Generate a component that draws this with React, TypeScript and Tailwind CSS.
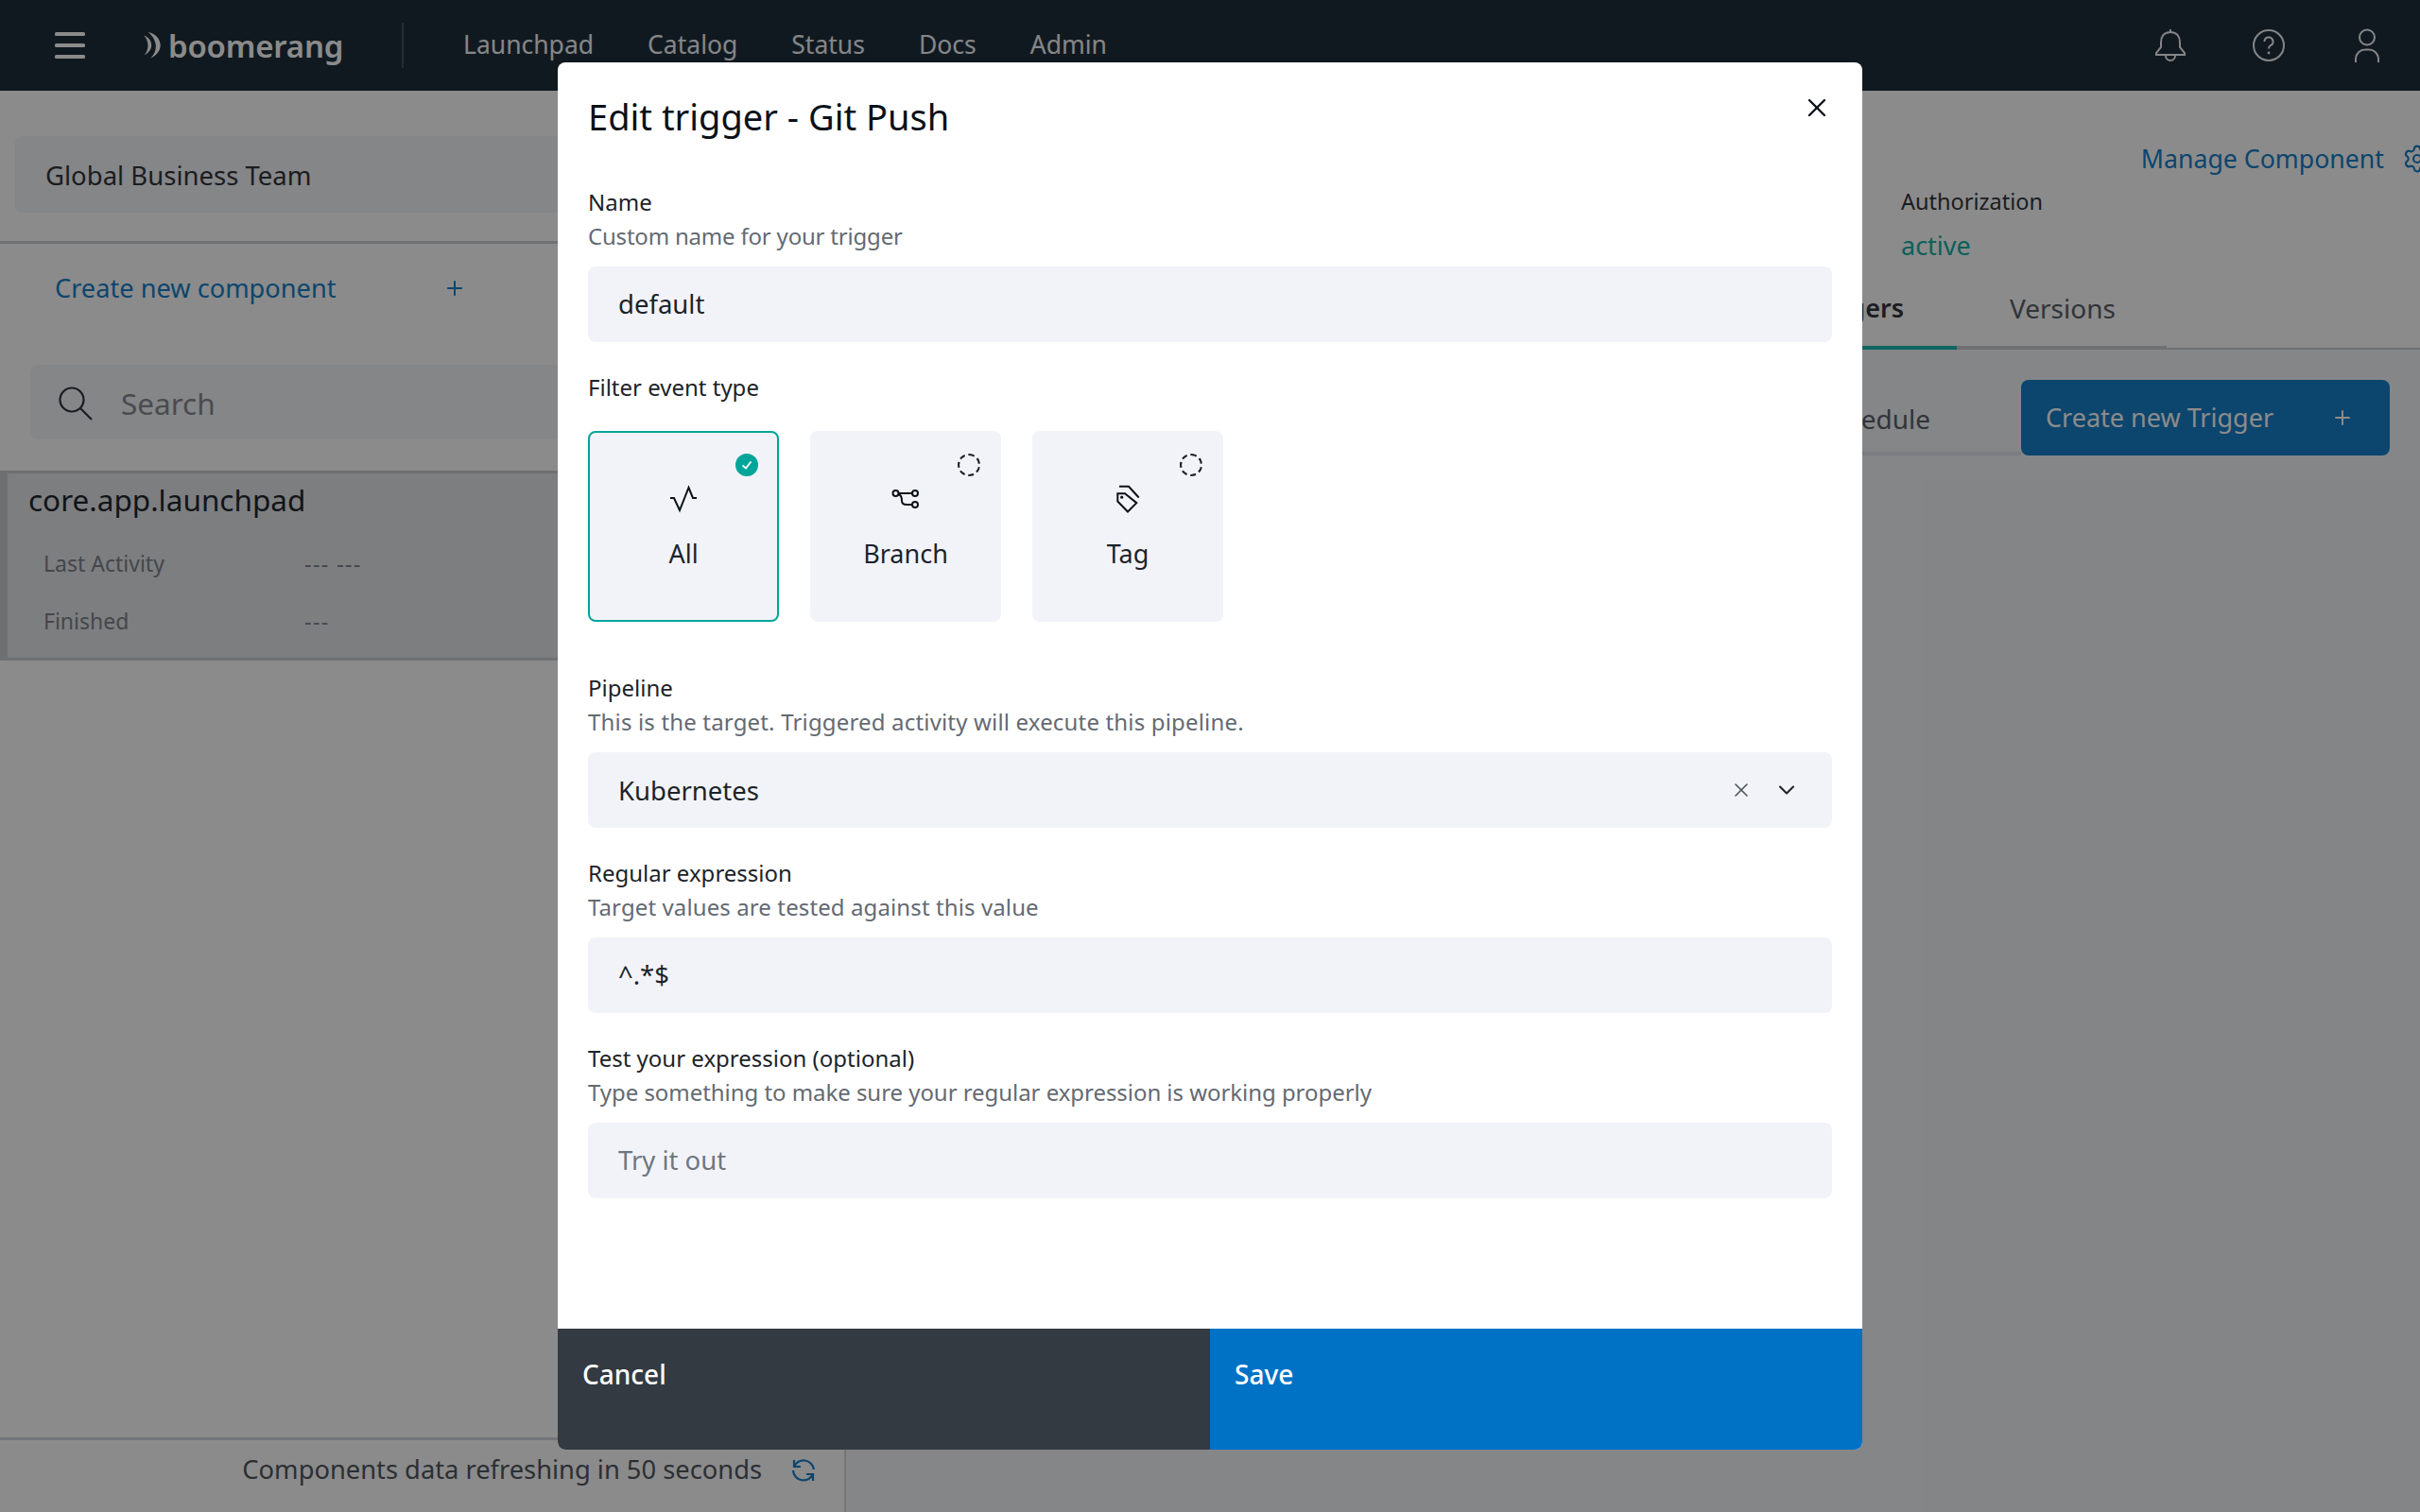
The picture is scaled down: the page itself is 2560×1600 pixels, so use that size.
import React from 'react'
import { Plus, Settings, X, ChevronDown } from 'lucide-react'

const NAV = ['Launchpad', 'Catalog', 'Status', 'Docs', 'Admin']

const Header: React.FC = () => (
  <header className="h-24 bg-[#0b1b29] flex items-center shrink-0 text-[#f2f4f8]">
    <svg width="32" height="28" viewBox="0 0 32 28" fill="white" className="ml-[58px]">
      <rect y="0" width="32" height="4" rx="1.5" />
      <rect y="12" width="32" height="4" rx="1.5" />
      <rect y="24" width="32" height="4" rx="1.5" />
    </svg>
    <div className="ml-[60px] flex items-center w-[275px] text-white">
      <svg width="23" height="30" viewBox="450 100 70 90" fill="currentColor">
        <path d="M457 113C486 125 492 158 458 177C474 158 474 132 457 113Z" />
        <path d="M470 102C512 112 530 160 478 187C504 160 500 128 470 102Z" />
      </svg>
      <span className="ml-[5px] text-[33px] leading-none font-semibold tracking-[-0.2px]">boomerang</span>
    </div>
    <div className="w-0.5 h-12 bg-[#33404c]" />
    <nav className="flex ml-[63px] gap-[57px] text-[26.5px]">
      {NAV.map((n) => <span key={n}>{n}</span>)}
    </nav>
    <div className="ml-auto mr-[38px] flex gap-[68px]" >
      <svg width="36" height="36" viewBox="0 0 36 36" fill="none" stroke="currentColor" strokeWidth="2">
        <path d="M18 1V4C11 4 8 9 8 15V20L3 26V28H33V26L28 20V15C28 9 25 4 18 4" />
        <path d="M13 29A5 5 0 0 0 23 29" />
      </svg>
      <svg width="36" height="36" viewBox="0 0 36 36" fill="none" stroke="currentColor" strokeWidth="2">
        <circle cx="18" cy="18" r="16" />
        <path d="M13.5 14a4.5 4.5 0 1 1 6.5 4c-1.4.8-2 1.5-2 3.5" />
        <circle cx="18" cy="26" r="1.4" fill="currentColor" stroke="none" />
      </svg>
      <svg width="36" height="36" viewBox="0 0 36 36" fill="none" stroke="currentColor" strokeWidth="2">
        <circle cx="18" cy="9.5" r="8" />
        <path d="M6 36V32A10 10 0 0 1 16 22.5H20A10 10 0 0 1 30 32V36" />
      </svg>
    </div>
  </header>
)

const Sidebar: React.FC = () => (
  <aside className="w-[895px] shrink-0 bg-white flex flex-col border-r-2 border-[#d0d3d8]">
    <div className="mx-4 mt-12 h-[81px] bg-[#f2f4f8] rounded-lg flex items-center px-8 pt-0.5 text-[27.5px] text-[#1c2329]">Global Business Team</div>
    <div className="mt-[30px] h-[3px] bg-[#c6c8cc]" />
    <div className="h-[94px] flex items-center pl-[58px] text-[27.2px] text-[#0072c3]">
      Create new component
      <Plus size={24} className="ml-[113px]" />
    </div>
    <div className="mx-8 mt-[34px] h-[79px] bg-[#f2f4f8] rounded-lg flex items-center pl-7 text-[31.5px] text-[#7a7f87]">
      <svg width="38" height="38" viewBox="0 0 38 38" fill="none" stroke="#1c2329" strokeWidth="2.2">
        <circle cx="16" cy="16" r="12.5" />
        <path d="M25 25 37 37" />
      </svg>
      <span className="ml-[30px] pt-0.5">Search</span>
    </div>
    <div className="mt-[33px] h-[201px] bg-[#e2e4e9] border-y-[3px] border-l-8 border-[#c6c8cc] pl-[22px] text-[#6f7680]">
      <div className="text-[31.5px] leading-10 text-[#0b1118] mt-2">core.app.launchpad</div>
      <div className="mt-[30px] flex text-[23px] h-[61px]"><span className="w-[292px] pl-4">Last Activity</span><span className="tracking-[1.5px]">--- ---</span></div>
      <div className="flex text-[23px]"><span className="w-[292px] pl-4">Finished</span><span className="tracking-[1.5px]">---</span></div>
    </div>
    <div className="mt-auto h-[79px] border-t-[3px] border-[#d0d3d8] flex items-center justify-end pr-[29px] pb-3.5 text-[27.3px] text-[#3f4650]">
      Components data refreshing in 50 seconds
      <svg width="28" height="28" viewBox="16 10 28 28" fill="none" stroke="#0072c3" strokeWidth="2.2" className="ml-[30px]">
        <path d="M20 14V21H27" />
        <path d="M20 21A11 11 0 0 1 41 24" />
        <path d="M40 36V29H33" />
        <path d="M40 29A11 11 0 0 1 19 25" />
      </svg>
    </div>
  </aside>
)

const Main: React.FC = () => (
  <main className="flex-1 bg-[#f2f4f8] flex flex-col overflow-hidden">
    <div className="bg-white h-[274px] flex flex-col">
      <div className="pt-[51px] flex justify-end text-[26.7px] leading-[42px] text-[#0072c3]">
        <div className="flex items-center gap-[19px] -mr-[13px] whitespace-nowrap">Manage Component <Settings size={32} strokeWidth={1.6} /></div>
      </div>
      <div className="pl-[1116px] mt-1.5 text-[23.5px] leading-9 text-[#1c2329] whitespace-nowrap">Authorization</div>
      <div className="pl-[1116px] mt-[9px] text-[27px] leading-10 text-[#00a99d]">active</div>
      <div className="mt-auto flex justify-end pr-[268px] border-b-2 border-[#c6c8cc] text-[28px] leading-10">
        <div className="pr-14 pb-5 border-b-4 border-[#05b5aa] font-semibold text-[27px] text-[#1c2329] -mb-0.5">Triggers</div>
        <div className="w-[222px] pl-14 pb-5 border-b-4 border-[#c7c9cc] text-[#4a5058] -mb-0.5">Versions</div>
      </div>
    </div>
    <div className="mt-8 h-20 pr-8 flex justify-end">
      <div className="mt-auto pr-24 pb-[15px] border-b-4 border-[#dfe1e6] text-[28px] leading-10 text-[#4a5058]">Schedule</div>
      <div className="w-[390px] rounded-lg bg-[#0072c3] text-white flex items-center pl-[26px] pr-[38px] text-[27px]">
        Create new Trigger
        <Plus size={24} className="ml-auto" />
      </div>
    </div>
  </main>
)

const Field: React.FC<{ label: string; desc: string; track?: string; children: React.ReactNode }> = ({ label, desc, track, children }) => (
  <div className="flex flex-col">
    <div className="text-[24px] leading-9 text-[#1c2329]">{label}</div>
    <div className={`text-[24px] leading-9 text-[#646a72] ${track ?? ''}`}>{desc}</div>
    <div className="mt-3.5">{children}</div>
  </div>
)

const Box: React.FC<{ children: React.ReactNode; muted?: boolean }> = ({ children, muted }) => (
  <div className={`h-20 rounded-lg bg-[#f2f3f8] flex items-center px-8 text-[27.5px] ${muted ? 'text-[#6f7680]' : 'text-[#1c2329]'}`}>{children}</div>
)

const Tile: React.FC<{ label: string; selected?: boolean; icon: React.ReactNode }> = ({ label, selected, icon }) => (
  <div className={`relative w-[202px] h-[202px] rounded-lg bg-[#f2f3f8] flex flex-col items-center text-[27px] text-[#1c2329] ${selected ? 'border-2 border-[#00a59a] pt-[54px]' : 'pt-14'}`}>
    {selected ? (
      <div className="absolute top-[22px] right-[20px] w-6 h-6 rounded-full bg-[#00a59a] flex items-center justify-center">
        <svg width="14" height="14" viewBox="0 0 14 14" fill="none" stroke="white" strokeWidth="1.8"><path d="M2.5 7.5 6 10.5 11.5 3.5" /></svg>
      </div>
    ) : (
      <div className="absolute top-6 right-[22px] w-6 h-6 rounded-full border-2 border-dashed border-[#1c2329]" />
    )}
    {icon}
    <div className="mt-6 leading-9">{label}</div>
  </div>
)

const ActivityIcon = () => (
  <svg width="32" height="32" viewBox="0 0 32 32" fill="none" stroke="#0b1118" strokeWidth="2"><path d="M2 15H6L12 28 21.5 4 26 15H30" /></svg>
)
const BranchIcon = () => (
  <svg width="32" height="32" viewBox="0 0 32 32" fill="none" stroke="#0b1118" strokeWidth="2">
    <circle cx="5.5" cy="10" r="3" /><circle cx="26" cy="10" r="3" /><circle cx="26" cy="22" r="3" />
    <path d="M8.5 10H23M8.5 11C12 12 12 15 12 18 12 21 14 22 17 22H23" />
  </svg>
)
const TagIcon = () => (
  <svg width="32" height="32" viewBox="0 0 32 32" fill="none" stroke="#0b1118" strokeWidth="2">
    <path d="M5.3 10.2H13L25.3 20.2 16 29.5 5.3 18.5Z" />
    <circle cx="9.7" cy="14.2" r="1.6" fill="#0b1118" stroke="none" />
    <path d="M7 2.8H17L27.7 14.5" />
  </svg>
)

const Modal: React.FC = () => (
  <div className="absolute left-[590px] top-[66px] w-[1380px] h-[1468px] bg-white rounded-lg flex flex-col overflow-hidden">
    <div className="relative h-[130px] px-8 pt-[31px] text-[38px] leading-[52px] text-[#0b1118]">
      Edit trigger - Git Push
      <X size={32} strokeWidth={1.8} className="absolute right-[32px] top-[32px]" />
    </div>
    <div className="flex-1 px-8 flex flex-col">
      <Field label="Name" desc="Custom name for your trigger" track="tracking-[-0.2px]"><Box>default</Box></Field>
      <div className="mt-[30px] text-[24px] leading-9 text-[#1c2329]">Filter event type</div>
      <div className="mt-7 flex gap-[33px]">
        <Tile label="All" selected icon={<ActivityIcon />} />
        <Tile label="Branch" icon={<BranchIcon />} />
        <Tile label="Tag" icon={<TagIcon />} />
      </div>
      <div className="mt-[52px]">
        <Field label="Pipeline" desc="This is the target. Triggered activity will execute this pipeline." track="tracking-[0.17px]">
          <Box>
            <span className="pt-0.5">Kubernetes</span>
            <X size={24} strokeWidth={1.6} className="ml-auto text-[#4b5259]" />
            <ChevronDown size={28} strokeWidth={1.8} className="ml-[22px] mr-0.5" />
          </Box>
        </Field>
      </div>
      <div className="mt-[30px]"><Field label="Regular expression" desc="Target values are tested against this value" track="tracking-[0.11px]"><Box>^.*$</Box></Field></div>
      <div className="mt-[30px]"><Field label="Test your expression (optional)" desc="Type something to make sure your regular expression is working properly" track="tracking-[-0.05px]"><Box muted>Try it out</Box></Field></div>
    </div>
    <div className="h-[128px] flex text-[28px] font-medium text-white">
      <div className="flex-1 bg-[#343a42] pl-[26px] pt-[27px]">Cancel</div>
      <div className="flex-1 bg-[#0072c6] pl-[26px] pt-[27px]">Save</div>
    </div>
  </div>
)

const App: React.FC = () => (
  <div className="relative w-screen h-screen overflow-hidden font-['Noto_Sans',sans-serif] flex flex-col">
    <Header />
    <div className="flex-1 flex min-h-0">
      <Sidebar />
      <Main />
    </div>
    <div className="absolute inset-0 bg-[rgba(23,23,23,0.5)]" />
    <Modal />
  </div>
)

export default App
